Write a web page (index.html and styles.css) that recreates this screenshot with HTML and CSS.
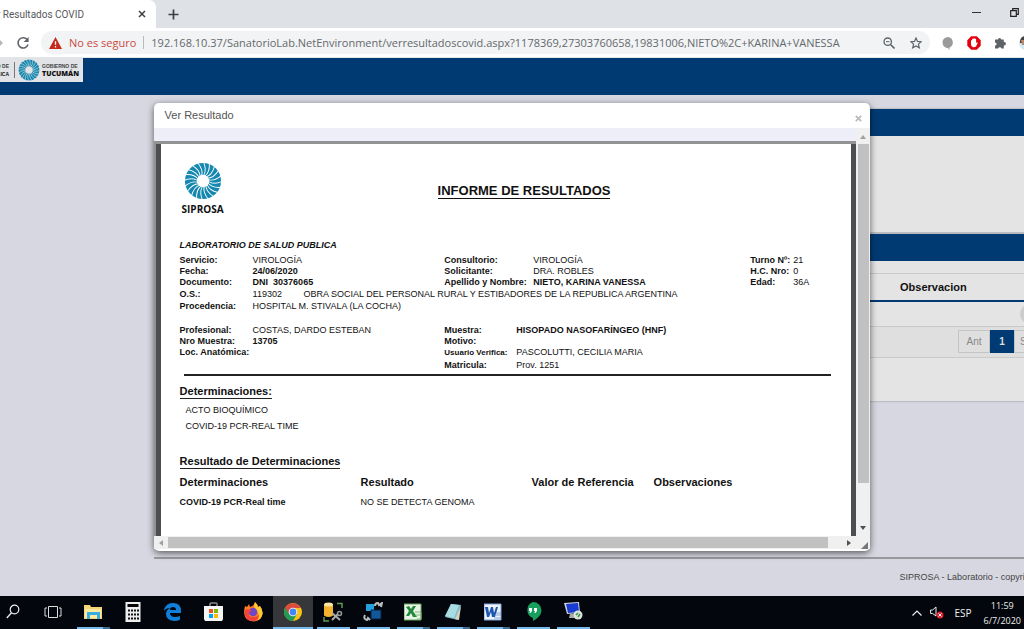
FILE: index.html
```html
<!DOCTYPE html>
<html lang="es">
<head>
	<meta charset="utf-8">
	<title>Ver Resultados COVID</title>
	<link rel="stylesheet" href="styles.css">
</head>
<body>
	<!-- shared logo -->
	<svg class="defs" width="0" height="0" aria-hidden="true">
		<defs>
			<path id="slit" d="M20 15 C23 11 23 6 20.500 0" />
			<g id="slits">
				<use href="#slit" />
				<use href="#slit" transform="rotate(90 20 20)" />
				<use href="#slit" transform="rotate(180 20 20)" />
				<use href="#slit" transform="rotate(270 20 20)" />
			</g>
			<symbol id="sun" viewBox="0 0 40 40">
				<circle cx="20" cy="20" r="19" fill="#1688b0" />
				<g fill="none" stroke="currentColor" stroke-width="1">
					<use href="#slits" />
					<use href="#slits" transform="rotate(18 20 20)" />
					<use href="#slits" transform="rotate(36 20 20)" />
					<use href="#slits" transform="rotate(54 20 20)" />
					<use href="#slits" transform="rotate(72 20 20)" />
				</g>
				<circle cx="20" cy="20" r="6.500" fill="currentColor" />
			</symbol>
		</defs>
	</svg>

	<div class="tabs">
		<div class="tab">
			<span class="tab-title">Ver Resultados COVID</span>
			<button class="icon-btn" aria-label="Cerrar"><svg width="8" height="8" viewBox="0 0 8 8"><path d="M1 1l6 6M7 1l-6 6" stroke="#3c4043" stroke-width="1.500" /></svg></button>
		</div>
		<button class="icon-btn new-tab" aria-label="Nueva"><svg width="11" height="11" viewBox="0 0 11 11"><path d="M5.500 0.500v10M0.500 5.500h10" stroke="#3c4043" stroke-width="1.700" /></svg></button>
		<div class="window-buttons">
			<button class="icon-btn" aria-label="Minimizar"><svg width="9" height="9" viewBox="0 0 9 9"><path d="M0 4.500h9" stroke="#333" /></svg></button>
			<button class="icon-btn" aria-label="Restaurar"><svg width="9" height="9" viewBox="0 0 9 9"><path d="M.7 2.700h5.600v5.600H.7zM2.700 2.500V.7h5.600v5.600H6.500" fill="none" stroke="#222" stroke-width="1.200" /></svg></button>
		</div>
	</div>

	<div class="toolbar">
		<svg width="3" height="6" viewBox="0 0 3 6"><path d="M0 0l3 3-3 3z" fill="#b5b7ba" /></svg>
		<button class="icon-btn reload" aria-label="Recargar"><svg width="14" height="14" viewBox="0 0 14 14"><path d="M11.500 4.200A5.100 5.100 0 1 0 12 8.500" fill="none" stroke="#5f6368" stroke-width="1.600" /><path d="M12.600 1v5H7.600z" fill="#5f6368" /></svg></button>
		<div class="omnibox">
			<svg width="13" height="12" viewBox="0 0 13 12"><path d="M6.500 0L13 12H0z" fill="#c5281c" /><path d="M6.500 4.200v3.600M6.500 9v1.500" stroke="#fff" stroke-width="1.300" /></svg>
			<span class="unsafe">No es seguro</span>
			<input class="url" type="text" aria-label="Dirección" value="192.168.10.37/SanatorioLab.NetEnvironment/verresultadoscovid.aspx?1178369,27303760658,19831006,NIETO%2C+KARINA+VANESSA">
			<button class="icon-btn" aria-label="Zoom"><svg width="12" height="12" viewBox="0 0 12 12"><circle cx="4.700" cy="4.700" r="3.700" fill="none" stroke="#5f6368" stroke-width="1.300" /><path d="M7.500 7.500l4 4" stroke="#5f6368" stroke-width="1.600" /><path d="M3 4.700h3.400" stroke="#5f6368" /></svg></button>
			<button class="icon-btn" aria-label="Favorito"><svg width="12" height="12" viewBox="0 0 12 12"><path d="M6 1l1.500 3.400 3.700.3-2.800 2.400.9 3.700L6 8.900l-3.300 1.900.9-3.700L.8 4.700l3.700-.3z" fill="none" stroke="#5f6368" stroke-width="1.200" /></svg></button>
		</div>
		<div class="extensions">
			<svg width="12" height="14" viewBox="0 0 12 14"><path d="M6 1a5.500 5.500 0 0 0 0 11l1.500 2V11.500A5.500 5.500 0 0 0 6 1z" fill="#9a9a9a" /></svg>
			<svg width="14" height="14" viewBox="0 0 14 14"><path d="M4.200 .3h5.600l3.900 3.900v5.600l-3.900 3.900H4.200L.3 9.800V4.200z" fill="#e2000f" /><path d="M4 7V4.500q.6-.8 1.200 0V3q.6-.8 1.300 0v-.5q.7-.7 1.300 0V3q.7-.7 1.300 0v4l1-.8q.8 0 .6.800L9 10.500q-1 1-3 .8Q4 11 4 8z" fill="#fff" /></svg>
			<svg width="12" height="12" viewBox="0 0 12 12"><path d="M1 2.500h3a1.600 1.600 0 1 1 3.200 0h2.600v2.700a1.700 1.700 0 1 1 0 3.300V11.500H7.500a1.700 1.700 0 0 0-3.300 0H1V8.600a1.600 1.600 0 0 0 0-3.200z" fill="#5f6368" /></svg>
			<svg width="14" height="14" viewBox="0 0 14 14"><circle cx="7" cy="7" r="7" fill="#cfeaf3" /><path d="M1 7V5q1-5 6-5t6 4v3z" fill="#4b3f3b" /><path d="M2 4h7v5H3z" fill="#b98a72" /></svg>
		</div>
	</div>

	<div class="page">
		<header class="site-header">
			<div class="brand">
				<div class="ministry">MINISTERIO DE<b>SALUD PÚBLICA</b></div>
				<svg class="brand-sun" width="22" height="22"><use href="#sun" /></svg>
				<div class="gov">GOBIERNO DE<b>TUCUMÁN</b></div>
			</div>
		</header>

		<main class="content">
			<section class="panel search-panel">
				<div class="panel-head"></div>
			</section>
			<section class="panel results-panel">
				<div class="panel-head"></div>
				<table class="grid">
					<thead><tr><th></th><th class="obs">Observacion</th></tr></thead>
					<tbody><tr><td></td><td class="action"><button class="round" aria-label="Ver"></button></td></tr></tbody>
				</table>
				<nav class="pager">
					<a href="#">Ant</a><a href="#" class="current">1</a><a href="#" class="next">Sig</a>
				</nav>
			</section>
		</main>
		<footer class="site-footer">SIPROSA - Laboratorio - copyright</footer>

		<section class="modal" role="dialog" aria-labelledby="modal-title">
			<div class="modal-head">
				<span id="modal-title">Ver Resultado</span>
				<button class="icon-btn" aria-label="Cerrar"><svg width="7" height="7" viewBox="0 0 7 7"><path d="M.8 .8l5.400 5.400M6.200 .8L.8 6.200" stroke="#bbb" stroke-width="1.800" /></svg></button>
			</div>
			<div class="viewer">
				<div class="sheet">
					<article class="report">
						<div class="report-head">
							<div class="siprosa">
								<svg width="38" height="38"><use href="#sun" /></svg>
								<b>SIPROSA</b>
							</div>
							<h1>INFORME DE RESULTADOS</h1>
						</div>
						<p class="lab">LABORATORIO DE SALUD PUBLICA</p>
						<div class="data">
							<dl>
								<dt>Servicio:</dt><dd>VIROLOGÍA</dd>
								<dt>Fecha:</dt><dd><b>24/06/2020</b></dd>
								<dt>Documento:</dt><dd><b>DNI&nbsp; 30376065</b></dd>
							</dl>
							<dl class="wide">
								<dt>Consultorio:</dt><dd>VIROLOGÍA</dd>
								<dt>Solicitante:</dt><dd>DRA. ROBLES</dd>
								<dt>Apellido y Nombre:</dt><dd><b>NIETO, KARINA VANESSA</b></dd>
							</dl>
							<dl class="narrow">
								<dt>Turno Nº:</dt><dd>21</dd>
								<dt>H.C. Nro:</dt><dd>0</dd>
								<dt>Edad:</dt><dd>36A</dd>
							</dl>
						</div>
						<dl class="cover">
							<dt>O.S.:</dt><dd><span class="code">119302</span>OBRA SOCIAL DEL PERSONAL RURAL Y ESTIBADORES DE LA REPUBLICA ARGENTINA</dd>
							<dt>Procedencia:</dt><dd>HOSPITAL M. STIVALA (LA COCHA)</dd>
						</dl>
						<div class="data sample">
							<dl>
								<dt>Profesional:</dt><dd>COSTAS, DARDO ESTEBAN</dd>
								<dt>Nro Muestra:</dt><dd><b>13705</b></dd>
								<dt>Loc. Anatómica:</dt><dd></dd>
							</dl>
							<dl class="medium">
								<dt>Muestra:</dt><dd><b>HISOPADO NASOFARÍNGEO (HNF)</b></dd>
								<dt>Motivo:</dt><dd></dd>
								<dt class="small">Usuario Verifica:</dt><dd>PASCOLUTTI, CECILIA MARIA</dd>
								<dt class="last">Matricula:</dt><dd class="last">Prov. 1251</dd>
							</dl>
						</div>
						<h2>Determinaciones:</h2>
						<ul>
							<li>ACTO BIOQUÍMICO</li>
							<li>COVID-19 PCR-REAL TIME</li>
						</ul>
						<h2>Resultado de Determinaciones</h2>
						<table class="results">
							<thead><tr><th>Determinaciones</th><th>Resultado</th><th>Valor de Referencia</th><th>Observaciones</th></tr></thead>
							<tbody><tr><td><b>COVID-19 PCR-Real time</b></td><td>NO SE DETECTA GENOMA</td><td></td><td></td></tr></tbody>
						</table>
					</article>
				</div>
				<div class="vbar">
					<svg width="6" height="4"><path d="M0 4l3-4 3 4z" fill="#a0a0a0" /></svg>
					<div class="thumb"></div>
					<svg width="6" height="4"><path d="M0 0l3 4 3-4z" fill="#505050" /></svg>
				</div>
			</div>
			<div class="hbar">
				<svg width="4" height="6"><path d="M4 0L0 3l4 3z" fill="#a0a0a0" /></svg>
				<div class="thumb"></div>
				<svg width="4" height="6"><path d="M0 0l4 3-4 3z" fill="#505050" /></svg>
				<svg class="grip" width="7" height="7"><path d="M7 0v7H0z" fill="#777" /></svg>
			</div>
		</section>
	</div>

	<div class="taskbar">
		<button class="task" aria-label="Buscar"><svg width="14" height="16" viewBox="0 0 14 16"><circle cx="8.500" cy="5.500" r="4.300" fill="none" stroke="#eee" stroke-width="1.200" /><path d="M5.500 8.800L.8 14" stroke="#eee" stroke-width="1.300" /></svg></button>
		<button class="task" aria-label="Vista de tareas"><svg width="18" height="14" viewBox="0 0 18 14"><path d="M4.500 1.500h9v11h-9zM3 3H1v8h2M15 3h2v8h-2" fill="none" stroke="#ddd" /></svg></button>
		<button class="task open many" aria-label="Explorador"><svg width="18" height="16" viewBox="0 0 18 16"><path d="M0 1h6l1 2h11v12H0z" fill="#f6d675" /><path d="M1 5h16v9H1z" fill="#fde9a0" /><path d="M3 8h13v7h-3v-4H6v4H3z" fill="#37aee2" /></svg></button>
		<button class="task" aria-label="Calculadora"><svg width="16" height="20" viewBox="0 0 16 20"><path d="M.5 0h15v20H.5z" fill="#eee" /><path d="M2.500 2h11v3h-11z" fill="#050505" /><path d="M3 8.500h11M3 12.500h11M3 16.500h11" stroke="#111" stroke-width="2" stroke-dasharray="2 1" /></svg></button>
		<button class="task" aria-label="Edge"><svg width="18" height="18" viewBox="0 0 18 18"><path d="M0 8Q1 0 9 0q8 0 8 8v2H6q0 4 5 4 3 0 5-1v3.500q-2 1.500-6 1.500-8-1-8-7 0-4 4-6Q2 5 0 8zm6-1h6q0-3-3-3T6 7z" fill="#0f7fd9" /></svg></button>
		<button class="task" aria-label="Tienda"><svg width="19" height="19" viewBox="0 0 19 19"><path d="M6 5V2q0-1 1-1h5q1 0 1 1v3" fill="none" stroke="#888" stroke-width="1.500" /><path d="M0 4h19v13l-1 2H1l-1-2z" fill="#f5f5f5" /><path d="M5 7h4v4H5z" fill="#f25022" /><path d="M10 7h4v4h-4z" fill="#7fba00" /><path d="M5 12h4v4H5z" fill="#00a4ef" /><path d="M10 12h4v4h-4z" fill="#ffb900" /></svg></button>
		<button class="task" aria-label="Firefox"><svg width="19" height="20" viewBox="0 0 19 20"><path d="M1 4l2 1 2-3 1 3q4-1 5-5 3 3 3 5l2-1q3 4 2.500 8-1.500 7-9 7.500Q1 19 .3 12-.2 8 1 4z" fill="#ff7b26" /><path d="M11 0q3 3 3 5l2-1q3 4 2.500 8-1 5-5 6.500Q17 13 12 8 9 5 11 0z" fill="#ffc930" /><circle cx="9" cy="10" r="4.300" fill="#7146c7" /><path d="M1 8q4-2 7 1-3 0-3 3-1 3 5 3 3 0 5-2-1 6-6 6-7 0-8-6z" fill="#f5433c" /></svg></button>
		<button class="task open active" aria-label="Chrome"><svg width="18" height="18" viewBox="0 0 18 18"><circle cx="9" cy="9" r="9" fill="#fbc116" /><path d="M9 9L1.200 4.500A9 9 0 0 0 9 18l4-7z" fill="#229a54" /><path d="M1.200 4.500A9 9 0 0 1 16.800 5H9L5 11z" fill="#dd4b3e" /><circle cx="9" cy="9" r="4.300" fill="#fff" /><circle cx="9" cy="9" r="3.400" fill="#4285f4" /></svg></button>
		<button class="task open" aria-label="Base de datos"><svg width="20" height="20" viewBox="0 0 20 20"><path d="M1 2.500v11q4.500 3 9 0v-11z" fill="#f3b32c" /><ellipse cx="5.500" cy="2.500" rx="4.500" ry="2" fill="#fbe7a8" /><path d="M14 1.500h5V6M1 15v4h5" fill="none" stroke="#5e9b56" stroke-width="1.500" /><path d="M9 18l6-6M9 11l8 7" stroke="#aaa" stroke-width="2" /><circle cx="16.500" cy="11.500" r="2" fill="none" stroke="#999" stroke-width="1.500" /></svg></button>
		<button class="task open" aria-label="Servidor"><svg width="20" height="19" viewBox="0 0 20 19"><path d="M3 2h8v7H3z" fill="#25a0e0" /><path d="M8 8h10v9H8z" fill="#11579a" stroke="#06213c" /><path d="M12 4q0-3 3-3l1 2 3-2-1 4M2 13q-2 4 2 5l1-2 2 2" fill="none" stroke="#bbb" stroke-width="2" /></svg></button>
		<button class="task open many" aria-label="Excel"><svg width="18" height="18" viewBox="0 0 18 18"><path d="M0 1h17v16H0z" fill="#e9f3e5" stroke="#65a861" /><path d="M2 4l3-1 2 3 2-3h3L9 8l4 6H9l-2-4-2 3H2l3-5z" fill="#22883a" /><path d="M11 9h6v7h-4M11 12h6" fill="none" stroke="#7db877" /></svg></button>
		<button class="task open many" aria-label="Bloc de notas"><svg width="18" height="18" viewBox="0 0 18 18"><path d="M7 1l10 1-3 15-13-3z" fill="#82bdc9" /><path d="M7 1l8 1-5 13-9-2z" fill="#a8dbe2" /><path d="M17 3l-2 14-4-1z" fill="#d9d1bc" /></svg></button>
		<button class="task open many" aria-label="Word"><svg width="18" height="18" viewBox="0 0 18 18"><path d="M0 1h17v16H0z" fill="#edf3fb" stroke="#7ea2d8" /><path d="M1 4h3l1 6 2-6h2l1 6 2-6h2l-3 10H8L7 9l-2 5H3z" fill="#1e58b0" /><path d="M12 10h5M11 12h6M10 15h7" stroke="#88a8d5" /></svg></button>
		<button class="task open" aria-label="Hangouts"><svg width="18" height="19" viewBox="0 0 18 19"><path d="M9 0a8.500 8.500 0 0 0 0 16v3q8-4 8.500-10.500A8.500 8.500 0 0 0 9 0z" fill="#179f5d" /><path d="M5 6h3v3L6.500 11H5.500L6 9H5zM10 6h3v3l-1.500 2h-1L11 9h-1z" fill="#fff" /></svg></button>
		<button class="task open" aria-label="Escritorio remoto"><svg width="19" height="19" viewBox="0 0 19 19"><path d="M0 1l15-1 1 11-13 1z" fill="#cdd3da" /><path d="M2 2l12-1 1 9-11 1z" fill="#173bd0" /><path d="M6 12h5l2 4H5z" fill="#aaa" /><circle cx="14" cy="13" r="4.500" fill="#dde3dc" /><path d="M12 13l2-2M14 15l2-3" stroke="#389047" stroke-width="1.500" /></svg></button>
		<div class="tray">
			<svg width="10" height="6" viewBox="0 0 10 6"><path d="M.5 5.500L5 1l4.500 4.500" fill="none" stroke="#eee" stroke-width="1.200" /></svg>
			<svg width="14" height="13" viewBox="0 0 14 13"><path d="M.6 4h2L6 1v9L2.600 7.500h-2z" fill="none" stroke="#eee" /><circle cx="10" cy="9" r="3.500" fill="#e11f2b" /><path d="M8.500 7.500l3 3m0-3l-3 3" stroke="#fff" /></svg>
			<span class="lang">ESP</span>
			<div class="clock">11:59<br>6/7/2020</div>
		</div>
	</div>
</body>
</html>
```
FILE: styles.css
```css
* {
	box-sizing: border-box;
}

body {
	margin: 0;
	min-height: 100vh;
	display: flex;
	flex-direction: column;
	overflow: hidden;
	background-color: #d7d7e1;
	font-family: "Liberation Sans", Arial, sans-serif;
	font-size: 9px;
	color: #111;
}

svg {
	display: block;
	flex-shrink: 0;
}

.defs {
	position: absolute;
}

button {
	font-family: inherit;
	border: 0;
	padding: 0;
	background: none;
}

.icon-btn {
	display: flex;
	align-items: center;
	justify-content: center;
}

/* browser */
.tabs {
	display: flex;
	height: 28px;
	background-color: #dee1e6;
}

.tab {
	display: flex;
	align-items: center;
	justify-content: flex-end;
	width: 156px;
	padding-right: 10px;
	background-color: #fff;
	border-radius: 0 7px 0 0;
	overflow: hidden;
}

.tab-title {
	flex-shrink: 0;
	margin-right: 54px;
	font-family: Roboto, sans-serif;
	font-size: 10px;
	color: #55585c;
}

.new-tab {
	width: 35px;
}

.window-buttons {
	display: flex;
	gap: 29px;
	margin-left: auto;
	padding: 0 5px 4px 0;
}

.toolbar {
	display: flex;
	align-items: center;
	height: 30px;
	background-color: #fff;
	border-bottom: 1px solid #e3e6e8;
	font-family: "Open Sans", sans-serif;
}

.reload {
	width: 38px;
	padding-left: 2px;
}

.omnibox {
	display: flex;
	align-items: center;
	flex: 1;
	height: 23px;
	padding: 0 8px;
	border-radius: 12px;
	background-color: #f1f3f4;
}

.omnibox .icon-btn {
	margin-left: 15px;
}

.unsafe {
	margin-left: 7px;
	padding-right: 7px;
	border-right: 1px solid #b8babd;
	font-size: 11px;
	line-height: 13px;
	color: #cb4a3f;
}

.url {
	flex: 1;
	min-width: 0;
	padding: 0 0 0 7px;
	border: 0;
	background: none;
	font-family: inherit;
	font-size: 11px;
	color: #66696d;
}

.extensions {
	display: flex;
	align-items: center;
	gap: 13px;
	width: 94px;
	padding-left: 12px;
	overflow: hidden;
}

/* page behind the dialog */
.page {
	position: relative;
	flex: 1;
	overflow: hidden;
}

.site-header {
	height: 37px;
	background-color: #003a73;
}

.brand {
	display: flex;
	align-items: center;
	justify-content: flex-end;
	width: 83px;
	height: 24px;
	padding-right: 4px;
	background-color: #e1e3e6;
	overflow: hidden;
	font-family: "Liberation Sans", Arial, sans-serif;
	font-size: 5px;
	line-height: 8px;
	font-weight: bold;
	color: #444;
}

.brand b {
	display: block;
	color: #111;
}

.brand-sun {
	margin: 0 2px 0 3px;
	color: #e1e3e6;
}

.ministry {
	flex-shrink: 0;
	padding-right: 5px;
	border-right: 1px solid #777;
	text-align: right;
}

.gov {
	flex-shrink: 0;
}

.gov b {
	font-family: "Open Sans", sans-serif;
	font-size: 7px;
	font-weight: 800;
}

.content {
	margin: 14px -25px 0 16%;
}

.panel {
	background-color: #e4e4e4;
	box-shadow: 0 0 2px #888;
}

.panel-head {
	height: 27px;
	background-color: #003a73;
}

.search-panel {
	height: 123px;
	margin-bottom: 2px;
}

.results-panel {
	height: 167px;
}

.grid {
	width: 100%;
	margin-top: 12px;
	border-collapse: collapse;
	border-top: 1px solid #c9c9c9;
}

.grid th {
	height: 27px;
	padding: 0;
	border-bottom: 2px solid #003a73;
	font-size: 11px;
	text-align: left;
}

.grid .obs {
	width: 149px;
}

.grid td {
	height: 26px;
	padding: 0;
	border-bottom: 1px solid #c9c9c9;
}

.round {
	display: block;
	width: 20px;
	height: 20px;
	margin-left: 120px;
	border-radius: 10px;
	background-color: #ccc;
}

.pager {
	display: flex;
	justify-content: flex-end;
	height: 31px;
	padding: 3px 4px 4px 0;
	background-color: #dfdfdf;
	border-bottom: 1px solid #c9c9c9;
}

.pager a {
	width: 32px;
	border: 1px solid #c4c4c4;
	font-size: 10px;
	line-height: 22px;
	text-align: center;
	text-decoration: none;
	color: #888;
}

.pager .current {
	width: 24px;
	border-color: #003a73;
	background-color: #003a73;
	font-weight: bold;
	color: #ddd;
}

.pager .next {
	width: 31px;
	padding-left: 5px;
	text-align: left;
}

.site-footer {
	margin: 156px 0 0 15%;
	padding: 13px 0 0 746px;
	border-top: 2px solid #98989f;
	white-space: nowrap;
	color: #444;
}

/* dialog */
.modal {
	position: absolute;
	top: 45px;
	left: 15%;
	width: 70%;
	padding-bottom: 2px;
	border-radius: 5px;
	background-color: #fff;
	box-shadow: 0 2px 7px rgba(0, 0, 0, 0.6);
}

.modal-head {
	display: flex;
	justify-content: space-between;
	height: 25px;
	padding: 5px 8px 0 11px;
	font-size: 11px;
	line-height: 14px;
	color: #555;
}

.viewer {
	display: flex;
	background-color: #eeeef8;
}

.sheet {
	flex: 1;
	margin-top: 13px;
	padding: 3px 0 0 2px;
	background-color: #929292;
}

.report {
	height: 392px;
	padding: 18px 20px 0 19px;
	border: solid #4b4f52;
	border-width: 0 5px 0 5px;
	background-color: #fff;
}

.vbar {
	display: flex;
	flex-direction: column;
	align-items: center;
	width: 14px;
	padding: 7px 0 6px;
	background-color: #f0f0f0;
}

.vbar .thumb {
	width: 11px;
	height: 339px;
	margin: 5px 0 auto;
	background-color: #c1c1c1;
}

.hbar {
	display: flex;
	align-items: center;
	height: 13px;
	padding-left: 5px;
	background-color: #f0f0f0;
}

.hbar .thumb {
	flex: 1;
	height: 11px;
	margin: 0 19px 0 5px;
	background-color: #c1c1c1;
}

.hbar .grip {
	align-self: flex-end;
	margin: 0 2px 0 10px;
}

/* report */
.report-head {
	display: flex;
	align-items: flex-start;
}

.siprosa {
	width: 46px;
	font-family: "Open Sans", sans-serif;
	font-size: 10px;
	line-height: 14px;
	text-align: center;
	color: #111;
}

.siprosa svg {
	margin: 0 auto 2px;
	color: #fff;
}

h1 {
	margin: 21px 0 0 212px;
	border-bottom: 1px solid #111;
	font-size: 13px;
	line-height: 15px;
}

h2 {
	display: table;
	margin: 9px 0 0;
	border-bottom: 1px solid #222;
	font-size: 11px;
	line-height: 13px;
}

.lab {
	margin: 22px 0 0;
	font-weight: bold;
	font-style: italic;
	line-height: 14px;
}

.data {
	display: grid;
	grid-template-columns: 264fr 305fr 81fr;
	margin-top: 3px;
}

dl {
	display: grid;
	grid-template-columns: 73px 1fr;
	align-content: start;
	margin: 0;
	line-height: 11px;
	white-space: nowrap;
}

dl.wide {
	grid-template-columns: 89px 1fr;
}

dl.medium {
	grid-template-columns: 72px 1fr;
}

dl.narrow {
	grid-template-columns: 43px 1fr;
}

dl.cover {
	line-height: 12px;
}

dt {
	font-weight: bold;
}

dt.small {
	font-size: 8px;
}

dd {
	margin: 0;
}

.last {
	line-height: 15px;
}

.code {
	display: inline-block;
	width: 51px;
}

.sample {
	margin-top: 13px;
}

.sample::after {
	content: "";
	grid-column: 1 / -1;
	margin: 1px 0 0 4px;
	border-top: 2px solid #222;
}

ul {
	margin: 3px 0 21px;
	padding: 0 0 0 6px;
	list-style: none;
	line-height: 16px;
}

.results {
	width: 100%;
	margin-top: 3px;
	table-layout: fixed;
	border-collapse: collapse;
	text-align: left;
}

.results th,
.results td {
	height: 20px;
	padding: 0;
}

.results th {
	font-size: 11px;
}

.results th:nth-child(1) {
	width: 181px;
}

.results th:nth-child(2) {
	width: 171px;
}

.results th:nth-child(3) {
	width: 122px;
}

/* taskbar */
.taskbar {
	display: flex;
	height: 33px;
	padding-right: 3px;
	background-color: #03060c;
	font-family: "Open Sans", sans-serif;
	font-size: 10px;
	color: #eee;
}

.task {
	display: flex;
	align-items: center;
	justify-content: center;
	width: 40px;
	border-bottom: 2px solid transparent;
}

.task:first-child {
	margin-left: -7px;
}

.task.open {
	background: linear-gradient(#76b9ed, #76b9ed) center bottom / 33px 2px no-repeat border-box;
}

.task.many {
	background-image: linear-gradient(90deg, #76b9ed 80%, #416d91 80%);
}

.task.active {
	border-color: #76b9ed;
	background: #36373a;
}

.tray {
	display: flex;
	align-items: center;
	margin-left: auto;
}

.tray svg {
	margin-right: 8px;
}

.lang {
	margin-left: 2px;
}

.clock {
	margin-left: 12px;
	font-size: 9px;
	line-height: 15px;
	text-align: center;
}
```
